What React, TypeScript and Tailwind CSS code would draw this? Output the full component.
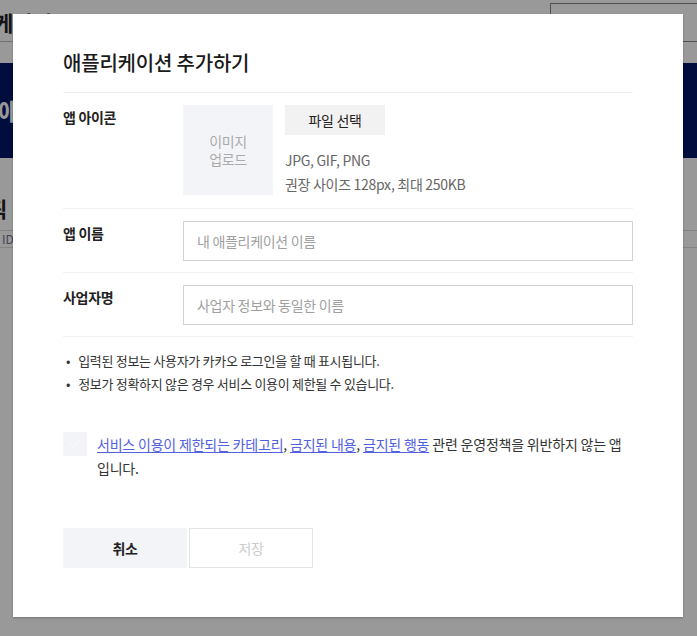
import { Check } from "lucide-react";

const font = { fontFamily: '"Noto Sans CJK KR", "Noto Sans", sans-serif' };

function BackgroundPage() {
  return (
    <div className="min-h-[636px] bg-white text-[#222]">
      {/* 헤더 */}
      <div className="flex h-[42px] items-start border-b border-[#bbb]">
        <span className="-ml-[6px] mt-[10px] text-[21px] font-bold leading-[24px]">케이션</span>
        <div className="ml-auto mr-[-40px] mt-[3px] h-[39px] w-[187px] border border-[#888]" />
      </div>
      <div className="mt-[21px] flex h-[95px] items-center bg-[#011666]">
        <span className="-ml-[2px] text-[24px] font-bold text-white">애플리케이션</span>
      </div>
      <div className="pt-[38px]">
        <div className="-ml-[12px] text-[21px] font-bold leading-[24px]">픽</div>
        <div className="mt-[10px] flex h-[18px] items-center border-y border-[#ddd] text-[12px] text-[#6a7390]">
          <span className="ml-[2px]">ID</span>
        </div>
      </div>
    </div>
  );
}

function Row({ label, last, children }: { label: string; last?: boolean; children: React.ReactNode }) {
  return (
    <div className={`flex border-t border-[#f0f0f0] pt-3 ${last ? "pb-[11px]" : "pb-3"}`}>
      <div className="w-[120px] shrink-0 text-[14px] font-bold leading-[24px] text-[#222]">{label}</div>
      <div className="flex-1">{children}</div>
    </div>
  );
}

export default function App() {
  return (
    <div className="relative h-[636px] w-[697px] overflow-hidden" style={font}>
      <BackgroundPage />
      <div className="absolute inset-0 bg-black/40" />

      <div className="absolute left-[13px] top-[14px] h-[603px] w-[670px] bg-white px-[50px] pt-[36px] tracking-[-0.3px] shadow-[0_1px_2px_rgba(0,0,0,0.25)]">
        <h2 className="pb-[16px] text-[20px] font-medium leading-[26px] tracking-[-0.2px] text-[#1a1a1a]">
          애플리케이션 추가하기
        </h2>

        <Row label="앱 아이콘">
          <div className="flex gap-3">
            <div className="flex h-[90px] w-[90px] items-center justify-center bg-[#f3f4f8] text-center text-[14px] leading-[18px] text-[#aaa]">
              이미지
              <br />
              업로드
            </div>
            <div>
              <button className="h-[30px] w-[100px] bg-[#f2f2f2] text-[14px] text-[#222]">파일 선택</button>
              <p className="mt-[13px] text-[14px] leading-[24px] text-[#666]">
                JPG, GIF, PNG
                <br />
                권장 사이즈 128px, 최대 250KB
              </p>
            </div>
          </div>
        </Row>

        <Row label="앱 이름" last>
          <input
            className="h-[40px] w-full border border-[#d2d2d2] px-[13px] text-[14px] outline-none placeholder:text-[#a0a0a0]"
            placeholder="내 애플리케이션 이름"
          />
        </Row>

        <Row label="사업자명" last>
          <input
            className="h-[40px] w-full border border-[#d2d2d2] px-[13px] text-[14px] outline-none placeholder:text-[#a0a0a0]"
            placeholder="사업자 정보와 동일한 이름"
          />
        </Row>

        <ul className="border-t border-[#f0f0f0] pt-3 text-[13px] leading-[23px] text-[#333]">
          <li className="flex gap-[8px]">
            <span className="pl-[3px]">•</span>입력된 정보는 사용자가 카카오 로그인을 할 때 표시됩니다.
          </li>
          <li className="flex gap-[8px]">
            <span className="pl-[3px]">•</span>정보가 정확하지 않은 경우 서비스 이용이 제한될 수 있습니다.
          </li>
        </ul>

        <label className="mt-[37px] flex gap-[10px]">
          <span className="flex h-[24px] w-[24px] shrink-0 items-center justify-center bg-[#f3f4f8]">
            <Check size={14} strokeWidth={1.5} className="text-white" />
          </span>
          <span className="pr-[10px] text-[14px] leading-[24px] tracking-[-0.2px] text-[#333]">
            <a className="text-[#5161e0] underline underline-offset-2">서비스 이용이 제한되는 카테고리</a>,{" "}
            <a className="text-[#5161e0] underline underline-offset-2">금지된 내용</a>,{" "}
            <a className="text-[#5161e0] underline underline-offset-2">금지된 행동</a> 관련 운영정책을 위반하지 않는 앱입니다.
          </span>
        </label>

        <div className="mt-[48px] flex gap-[2px]">
          <button className="h-[40px] w-[124px] bg-[#f3f4f8] text-[14px] font-bold text-[#222]">취소</button>
          <button className="h-[40px] w-[124px] border border-[#e5e5e5] text-[14px] text-[#ccc]">저장</button>
        </div>
      </div>
    </div>
  );
}
